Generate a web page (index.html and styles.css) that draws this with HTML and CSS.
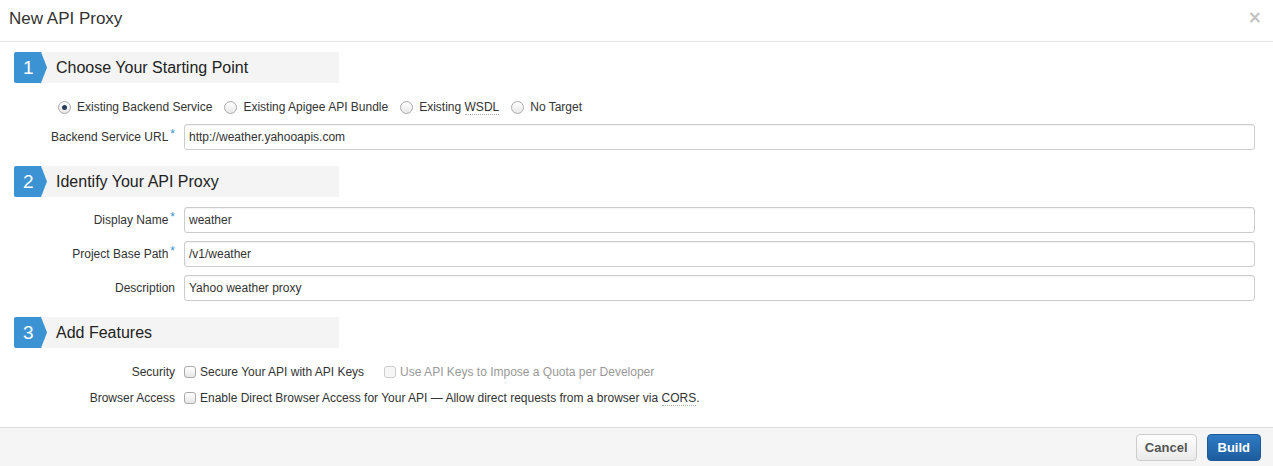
FILE: index.html
```html
<!DOCTYPE html>
<html>
<head>
<meta charset="utf-8">
<link rel="stylesheet" href="styles.css">
</head>
<body>
<div class="modal">
  <div class="modal-header">
    <h3 class="modal-title">New API Proxy</h3>
    <span class="close">&times;</span>
  </div>
  <div class="modal-body">
    <div class="step">
      <div class="badge">1</div>
      <div class="step-title">Choose Your Starting Point</div>
    </div>
    <div class="radios">
      <label class="radio"><span class="radio-dot checked"></span><span>Existing Backend Service</span></label>
      <label class="radio"><span class="radio-dot"></span><span>Existing Apigee API Bundle</span></label>
      <label class="radio"><span class="radio-dot"></span><span>Existing <abbr>WSDL</abbr></span></label>
      <label class="radio"><span class="radio-dot"></span><span>No Target</span></label>
    </div>
    <div class="row">
      <div class="label">Backend Service URL<span class="req">*</span></div>
      <div class="input">http://weather.yahooapis.com</div>
    </div>

    <div class="step">
      <div class="badge">2</div>
      <div class="step-title">Identify Your API Proxy</div>
    </div>
    <div class="row">
      <div class="label">Display Name<span class="req">*</span></div>
      <div class="input">weather</div>
    </div>
    <div class="row">
      <div class="label">Project Base Path<span class="req">*</span></div>
      <div class="input">/v1/weather</div>
    </div>
    <div class="row">
      <div class="label">Description</div>
      <div class="input">Yahoo weather proxy</div>
    </div>

    <div class="step">
      <div class="badge">3</div>
      <div class="step-title">Add Features</div>
    </div>
    <div class="row check-row">
      <div class="label">Security</div>
      <div class="checks">
        <label class="check"><span class="box"></span><span>Secure Your API with API Keys</span></label>
        <label class="check disabled"><span class="box"></span><span>Use API Keys to Impose a Quota per Developer</span></label>
      </div>
    </div>
    <div class="row check-row">
      <div class="label">Browser Access</div>
      <div class="checks">
        <label class="check"><span class="box"></span><span>Enable Direct Browser Access for Your API — Allow direct requests from a browser via <abbr>CORS</abbr>.</span></label>
      </div>
    </div>
  </div>
  <div class="modal-footer">
    <button class="btn">Cancel</button>
    <button class="btn btn-primary">Build</button>
  </div>
</div>
</body>
</html>
```

FILE: styles.css
```css
* { box-sizing: border-box; }
html, body { margin: 0; padding: 0; background: #fff; }
body {
  font-family: "Liberation Sans", Arial, sans-serif;
  font-size: 12px;
  color: #333;
  width: 1273px;
  height: 466px;
  overflow: hidden;
}
.modal { display: flex; flex-direction: column; height: 466px; }
.modal-header {
  height: 42px;
  border-bottom: 1px solid #e5e5e5;
  display: flex;
  align-items: center;
  justify-content: space-between;
  padding: 0 11px 0 9px;
}
.modal-title {
  margin: 0;
  font-weight: normal;
  font-size: 17px;
  color: #333;
  position: relative;
  top: -2px;
}
.close {
  font-family: "DejaVu Sans", sans-serif;
  font-size: 17px;
  font-weight: bold;
  color: #c2c2c2;
  line-height: 1;
  position: relative;
  top: -3px;
}
.modal-body {
  flex: 1;
  padding: 10px 18px 0 14px;
}
.step {
  width: 325px;
  height: 31px;
  background: #f4f4f4;
  display: flex;
  align-items: center;
}
.badge {
  width: 33px;
  height: 31px;
  background: #3b93d3;
  color: #fff;
  font-size: 19px;
  display: flex;
  align-items: center;
  padding-left: 9px;
  border-radius: 2px 0 0 2px;
  clip-path: polygon(0 0, 27px 0, 33px 50%, 27px 100%, 0 100%);
}
.step-title {
  margin-left: 9px;
  font-size: 16px;
  color: #222;
}
.radios {
  display: flex;
  align-items: center;
  padding-left: 44px;
  height: 26px;
  margin-top: 11px;
  margin-bottom: 4px;
}
.radio {
  display: flex;
  align-items: center;
  margin-right: 12px;
  color: #333;
}
.radio-dot {
  width: 13px;
  height: 13px;
  border: 1px solid #aaa;
  border-radius: 50%;
  background: linear-gradient(#fff, #e8e8e8);
  margin-right: 6px;
  display: inline-flex;
  align-items: center;
  justify-content: center;
}
.radio-dot.checked::after {
  content: "";
  width: 5px;
  height: 5px;
  border-radius: 50%;
  background: #2a3f5a;
}
abbr {
  text-decoration: none;
  border-bottom: 1px dotted #aaa;
}
.row {
  display: flex;
  align-items: center;
  height: 26px;
  margin-bottom: 8px;
}
.row:last-of-type { margin-bottom: 0; }
.label {
  width: 161px;
  text-align: right;
  color: #333;
  margin-right: 9px;
  flex-shrink: 0;
}
.req {
  color: #3b8fd0;
  font-size: 12px;
  vertical-align: top;
  position: relative;
  top: -3px;
  margin-left: 2px;
}
.input {
  flex: 1;
  height: 26px;
  border: 1px solid #ccc;
  border-radius: 3px;
  padding: 0 4px;
  display: flex;
  align-items: center;
  color: #333;
  box-shadow: inset 0 1px 1px rgba(0,0,0,0.05);
}
.row + .row { margin-top: 0; }
.modal-body > .row + .step { margin-top: 16px; }
.step + .row { margin-top: 10px; }
.step + .row + .row + .row { margin-top: 1px; }
.check-row { height: 18px; margin-bottom: 8px; }
.step + .check-row { margin-top: 15px; }
.checks { display: flex; align-items: center; }
.check { display: flex; align-items: center; margin-right: 20px; }
.box {
  width: 12px;
  height: 12px;
  border: 1px solid #aaa;
  border-radius: 3px;
  background: linear-gradient(#fff, #e6e6e6);
  margin-right: 4px;
}
.check.disabled { color: #999; }
.check.disabled .box { border-color: #ccc; background: #f6f6f6; }
.modal-footer {
  height: 39px;
  background: #f5f5f5;
  border-top: 1px solid #ddd;
  display: flex;
  align-items: center;
  justify-content: flex-end;
  padding: 0 12px 0 0;
  gap: 10px;
}
.btn {
  font-family: "Liberation Sans", Arial, sans-serif;
  font-size: 13px;
  font-weight: bold;
  height: 27px;
  padding: 0 8px;
  border-radius: 4px;
  border: 1px solid #ccc;
  background: linear-gradient(#fefefe, #eaeaea);
  color: #555;
}
.btn-primary {
  background: linear-gradient(#2f7cc4, #1d5c9e);
  border-color: #1d5a98;
  color: #fff;
  padding: 0 10px;
}
```
